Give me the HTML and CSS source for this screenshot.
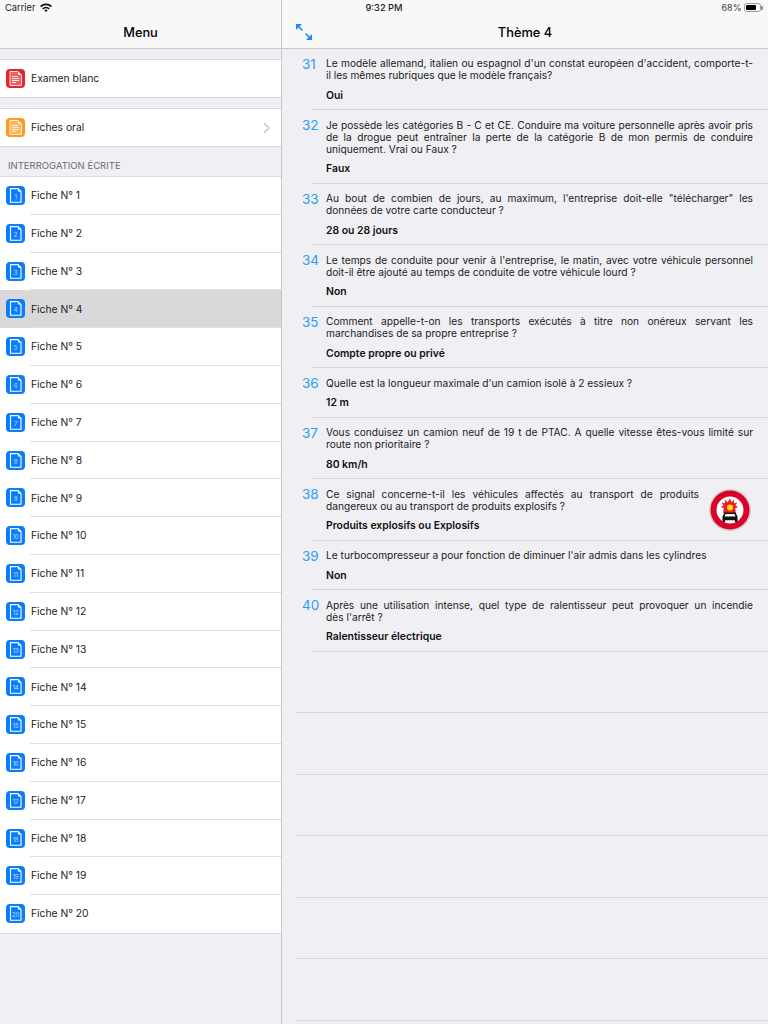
FILE: index.html
```html
<!DOCTYPE html>
<html lang="fr">
<head>
  <meta charset="utf-8">
  <title>Thème 4</title>
  <link rel="stylesheet" href="styles.css">
</head>
<body>
  <svg class="defs" width="0" height="0">
    <symbol id="doc" viewBox="0 0 19 19">
      <path d="M4.500 2.600h7.500l3 3v10.700h-10.500z" fill="none" stroke="#fff" stroke-width="1.100"/>
      <path d="M12 2.500v3h3z" fill="#fff"/>
    </symbol>
    <symbol id="sheet" viewBox="0 0 19 19">
      <path d="M4 2.500h8l3.500 3.500v10.500h-11.500z" fill="#fff" fill-opacity=".28" stroke="#fff" stroke-opacity=".8"/>
      <path d="M12 2.500v3.500h3.500z" fill="#fff"/>
      <path d="M6 7.500h6M6 9.500h7M6 11.500h7M6 13.500h4" stroke="#fff" stroke-opacity=".8"/>
    </symbol>
  </svg>

  <div class="status">
    <div class="status-left">
      <span>Carrier</span>
      <svg class="wifi" viewBox="0 0 12 9" width="12" height="9">
        <path d="M0 3a8.500 8.500 0 0 1 12 0l-1.200 1.300a6.800 6.800 0 0 0-9.600 0z"/>
        <path d="M2.200 5.200a5.400 5.400 0 0 1 7.600 0L8.600 6.500a3.700 3.700 0 0 0-5.200 0z"/>
        <path d="M4.300 7.300a2.400 2.400 0 0 1 3.400 0L6 9z"/>
      </svg>
    </div>
    <div class="status-time">9:32 PM</div>
    <div class="status-right">
      <span>68%</span>
      <div class="battery"><div class="battery-level"></div></div>
      <div class="battery-tip"></div>
    </div>
  </div>

  <div class="split">
    <aside class="menu">
      <header class="bar"><h1>Menu</h1></header>

      <div class="group first">
        <div class="row">
          <div class="ic red"><svg width="19" height="19"><use href="#sheet"/></svg></div>
          <span>Examen blanc</span>
        </div>
      </div>

      <div class="group second">
        <div class="row">
          <div class="ic orange"><svg width="19" height="19"><use href="#sheet"/></svg></div>
          <span>Fiches oral</span>
          <svg class="chevron" viewBox="0 0 7 12" width="7" height="12"><path d="M1 1l5 5-5 5" fill="none" stroke="#c7c7cc" stroke-width="1.500"/></svg>
        </div>
      </div>

      <div class="section">INTERROGATION ÉCRITE</div>

      <div class="group">
        <div class="row"><div class="ic"><svg width="19" height="19"><use href="#doc"/></svg><b>1</b></div><span>Fiche N° 1</span></div>
        <div class="row"><div class="ic"><svg width="19" height="19"><use href="#doc"/></svg><b>2</b></div><span>Fiche N° 2</span></div>
        <div class="row"><div class="ic"><svg width="19" height="19"><use href="#doc"/></svg><b>3</b></div><span>Fiche N° 3</span></div>
        <div class="row active"><div class="ic"><svg width="19" height="19"><use href="#doc"/></svg><b>4</b></div><span>Fiche N° 4</span></div>
        <div class="row"><div class="ic"><svg width="19" height="19"><use href="#doc"/></svg><b>5</b></div><span>Fiche N° 5</span></div>
        <div class="row"><div class="ic"><svg width="19" height="19"><use href="#doc"/></svg><b>6</b></div><span>Fiche N° 6</span></div>
        <div class="row"><div class="ic"><svg width="19" height="19"><use href="#doc"/></svg><b>7</b></div><span>Fiche N° 7</span></div>
        <div class="row"><div class="ic"><svg width="19" height="19"><use href="#doc"/></svg><b>8</b></div><span>Fiche N° 8</span></div>
        <div class="row"><div class="ic"><svg width="19" height="19"><use href="#doc"/></svg><b>9</b></div><span>Fiche N° 9</span></div>
        <div class="row"><div class="ic"><svg width="19" height="19"><use href="#doc"/></svg><b>10</b></div><span>Fiche N° 10</span></div>
        <div class="row"><div class="ic"><svg width="19" height="19"><use href="#doc"/></svg><b>11</b></div><span>Fiche N° 11</span></div>
        <div class="row"><div class="ic"><svg width="19" height="19"><use href="#doc"/></svg><b>12</b></div><span>Fiche N° 12</span></div>
        <div class="row"><div class="ic"><svg width="19" height="19"><use href="#doc"/></svg><b>13</b></div><span>Fiche N° 13</span></div>
        <div class="row"><div class="ic"><svg width="19" height="19"><use href="#doc"/></svg><b>14</b></div><span>Fiche N° 14</span></div>
        <div class="row"><div class="ic"><svg width="19" height="19"><use href="#doc"/></svg><b>15</b></div><span>Fiche N° 15</span></div>
        <div class="row"><div class="ic"><svg width="19" height="19"><use href="#doc"/></svg><b>16</b></div><span>Fiche N° 16</span></div>
        <div class="row"><div class="ic"><svg width="19" height="19"><use href="#doc"/></svg><b>17</b></div><span>Fiche N° 17</span></div>
        <div class="row"><div class="ic"><svg width="19" height="19"><use href="#doc"/></svg><b>18</b></div><span>Fiche N° 18</span></div>
        <div class="row"><div class="ic"><svg width="19" height="19"><use href="#doc"/></svg><b>19</b></div><span>Fiche N° 19</span></div>
        <div class="row"><div class="ic"><svg width="19" height="19"><use href="#doc"/></svg><b>20</b></div><span>Fiche N° 20</span></div>
      </div>
    </aside>

    <main class="theme">
      <header class="bar">
        <svg class="expand" viewBox="0 0 16 16" width="16" height="16">
          <path d="M0 0h6L0 6z"/>
          <path d="M16 16h-6l6-6z"/>
          <path d="M2 2l4.500 4.500M14 14l-4.500-4.500" stroke="#1a8cff" stroke-width="1.700" fill="none"/>
        </svg>
        <h1>Thème 4</h1>
      </header>

      <div class="qa">
        <div class="num">31</div>
        <div class="body">
          <p class="q">Le modèle allemand, italien ou espagnol d'un constat européen d'accident, comporte-t-il les mêmes rubriques que le modèle français?</p>
          <p class="a">Oui</p>
        </div>
      </div>
      <div class="qa">
        <div class="num">32</div>
        <div class="body">
          <p class="q">Je possède les catégories B - C et CE. Conduire ma voiture personnelle après avoir pris de la drogue peut entraîner la perte de la catégorie B de mon permis de conduire uniquement. Vrai ou Faux ?</p>
          <p class="a">Faux</p>
        </div>
      </div>
      <div class="qa">
        <div class="num">33</div>
        <div class="body">
          <p class="q">Au bout de combien de jours, au maximum, l'entreprise doit-elle "télécharger" les données de votre carte conducteur ?</p>
          <p class="a">28 ou 28 jours</p>
        </div>
      </div>
      <div class="qa">
        <div class="num">34</div>
        <div class="body">
          <p class="q">Le temps de conduite pour venir à l'entreprise, le matin, avec votre véhicule personnel doit-il être ajouté au temps de conduite de votre véhicule lourd ?</p>
          <p class="a">Non</p>
        </div>
      </div>
      <div class="qa">
        <div class="num">35</div>
        <div class="body">
          <p class="q">Comment appelle-t-on les transports exécutés à titre non onéreux servant les marchandises de sa propre entreprise ?</p>
          <p class="a">Compte propre ou privé</p>
        </div>
      </div>
      <div class="qa">
        <div class="num">36</div>
        <div class="body">
          <p class="q">Quelle est la longueur maximale d'un camion isolé à 2 essieux ?</p>
          <p class="a">12 m</p>
        </div>
      </div>
      <div class="qa">
        <div class="num">37</div>
        <div class="body">
          <p class="q">Vous conduisez un camion neuf de 19 t de PTAC. A quelle vitesse êtes-vous limité sur route non prioritaire ?</p>
          <p class="a">80 km/h</p>
        </div>
      </div>
      <div class="qa">
        <div class="num">38</div>
        <div class="body narrow">
          <p class="q">Ce signal concerne-t-il les véhicules affectés au transport de produits dangereux ou au transport de produits explosifs ?</p>
          <p class="a">Produits explosifs ou Explosifs</p>
        </div>
        <svg class="sign" viewBox="0 0 42 42" width="42" height="42">
          <circle cx="21" cy="21" r="21" fill="#cfcfd3"/>
          <circle cx="21" cy="21" r="16.500" fill="#fff" stroke="#dc0026" stroke-width="6"/>
          <path d="M21 9.500l1.500 3.700 2.800-2.700-.3 3.800 3.400-.7-2 3 2.700 1.400-2.900 1.300.7 4.700H14.100l.7-4.700-2.900-1.300 2.700-1.400-2-3 3.400.7-.3-3.800 2.800 2.700z" fill="#e8202a"/>
          <circle cx="21" cy="18.500" r="3" fill="#ffe000"/>
          <path d="M15.500 23.500h11l2 4v5.500h-2.600v-1.800H16.100V33h-2.600v-5.500z" fill="#111"/>
          <path d="M16.500 25h9l1 2.500h-11z" fill="#fff"/>
        </svg>
      </div>
      <div class="qa">
        <div class="num">39</div>
        <div class="body">
          <p class="q">Le turbocompresseur a pour fonction de diminuer l'air admis dans les cylindres</p>
          <p class="a">Non</p>
        </div>
      </div>
      <div class="qa">
        <div class="num">40</div>
        <div class="body">
          <p class="q">Après une utilisation intense, quel type de ralentisseur peut provoquer un incendie dès&nbsp;l'arrêt ?</p>
          <p class="a">Ralentisseur électrique</p>
        </div>
      </div>

      <div class="empty"></div>
      <div class="empty"></div>
      <div class="empty"></div>
      <div class="empty"></div>
      <div class="empty"></div>
      <div class="empty"></div>
    </main>
  </div>
</body>
</html>
```

FILE: styles.css
```css
* {
  box-sizing: border-box;
}

html, body {
  height: 100%;
}

body {
  margin: 0;
  position: relative;
  overflow: hidden;
  background-color: #efeff4;
  color: #000;
  font-family: Inter, "Liberation Sans", sans-serif;
}

.defs {
  position: absolute;
}

/* status bar sits over both headers */
.status {
  position: absolute;
  top: 0;
  left: 0;
  width: 100%;
  height: 15px;
  padding: 0 5px;
  display: flex;
  align-items: center;
  justify-content: space-between;
  font-size: 9.300px;
  color: #222;
  z-index: 10;
}

.status-left {
  display: flex;
  align-items: center;
  gap: 5px;
  width: 120px;
}

.status-time {
  font-weight: 500;
}

.status-right {
  width: 120px;
  display: flex;
  align-items: center;
  justify-content: flex-end;
  font-size: 9px;
  color: #444;
}

.wifi {
  fill: #111;
}

.battery {
  width: 17px;
  height: 9px;
  margin-left: 3px;
  padding: 1px;
  border: 1px solid #999;
  border-radius: 2.500px;
}

.battery-level {
  width: 10px;
  height: 100%;
  background-color: #000;
  border-radius: 1px;
}

.battery-tip {
  width: 1.500px;
  height: 4px;
  background-color: #999;
}

.split {
  display: flex;
  height: 100%;
}

.menu {
  flex: 0 0 282px;
  height: 100%;
  border-right: 1px solid #c8c7cc;
}

.theme {
  flex: 1;
  height: 100%;
  overflow: hidden;
}

.bar {
  position: relative;
  height: 49px;
  padding-top: 16px;
  display: flex;
  align-items: center;
  justify-content: center;
  background-color: #f8f8f8;
  border-bottom: 1px solid #c8c7cc;
}

.bar h1 {
  margin: 0;
  font-size: 12.800px;
  font-weight: 500;
}

.expand {
  position: absolute;
  left: 14px;
  top: 24px;
  fill: #1a8cff;
}

.group {
  background-color: #fff;
  border-top: 1px solid #d9d9dd;
  border-bottom: 1px solid #d9d9dd;
}

.first {
  margin-top: 10px;
}

.second {
  margin-top: 10px;
}

.first .row,
.second .row {
  height: 37px;
}

.section {
  height: 29px;
  padding: 13px 8px 0;
  font-size: 9.500px;
  line-height: 12px;
  color: #6d6d72;
}

.row {
  position: relative;
  height: 37.800px;
  padding: 0 0 1.500px 31px;
  display: flex;
  align-items: center;
  font-size: 10.300px;
  color: #222;
}

.row + .row::before {
  content: "";
  position: absolute;
  top: -1px;
  left: 30px;
  right: 0;
  height: 1px;
  background-color: #e0e0e3;
}

.active {
  background-color: #d9d9d9;
}

.ic {
  position: absolute;
  left: 6px;
  top: 9px;
  width: 19px;
  height: 19px;
  border-radius: 4px;
  background-color: #0a7cff;
  display: flex;
  align-items: center;
  justify-content: center;
}

.ic svg {
  position: absolute;
  left: 0;
  top: 0;
}

.ic b {
  padding-top: 2px;
  font-size: 6px;
  font-weight: 400;
  color: #bfdcff;
  letter-spacing: -0.300px;
}

.red {
  background-color: #e5252f;
}

.orange {
  background-color: #ff9a1f;
}

.chevron {
  position: absolute;
  right: 11px;
  top: 13px;
}

.qa {
  position: relative;
  display: flex;
  margin-left: 15px;
  padding: 8.500px 15px 0 0;
}

.qa:first-of-type {
  margin-top: -0.500px;
}

.qa::after {
  content: "";
  position: absolute;
  left: 15px;
  right: 0;
  bottom: 0;
  height: 1px;
  background-color: #d5d5d9;
}

.num {
  flex: 0 0 29px;
  margin-top: -1.500px;
  padding-left: 5px;
  font-size: 13.500px;
  line-height: 16px;
  color: #2d9cf5;
}

.body {
  flex: 1;
  min-width: 0;
  padding-bottom: 8.500px;
}

.narrow {
  padding-right: 54px;
}

.q {
  margin: 0;
  font-size: 10.200px;
  line-height: 12px;
  text-align: justify;
  color: #222;
}

.a {
  margin: 8.500px 0 0;
  font-size: 10.400px;
  font-weight: 600;
  line-height: 12px;
  color: #111;
}

.sign {
  position: absolute;
  right: 17px;
  top: 10px;
}

.empty {
  height: 61.500px;
  margin-left: 14px;
  border-bottom: 1px solid #d5d5d9;
}
```
